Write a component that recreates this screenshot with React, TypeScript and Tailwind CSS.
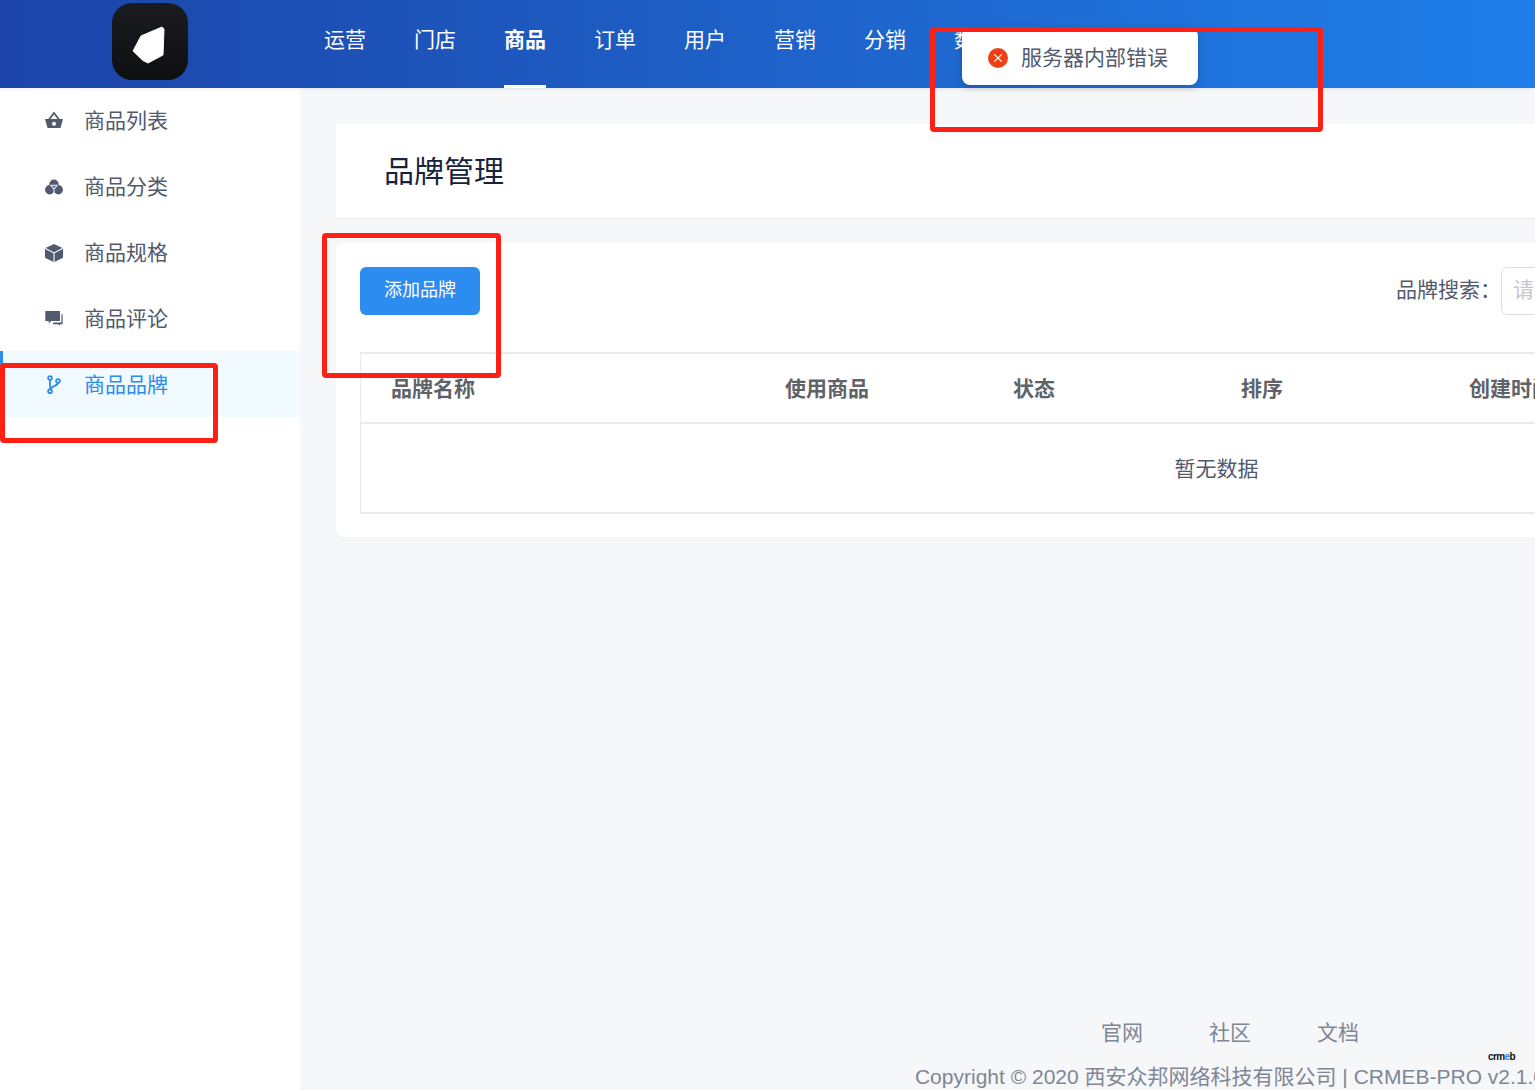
import React from 'react';

const font = "font-['Liberation_Sans','Noto_Sans_CJK_SC',sans-serif]";

const navItems = ['运营', '门店', '商品', '订单', '用户', '营销', '分销', '数据', '设置', '系统'];

function BasketIcon() {
  return (
    <svg viewBox="0 0 24 24" className="w-6 h-6">
      <path d="M7 10.5 L12 4 L17 10.5" fill="none" stroke="currentColor" strokeWidth="1.8" />
      <path d="M3 10 H21 L18.5 19 H5.5 Z" fill="currentColor" />
      <circle cx="12" cy="14.8" r="2" fill="#fff" />
    </svg>
  );
}

function CategoryIcon() {
  return (
    <svg viewBox="0 0 24 24" className="w-6 h-6">
      <circle cx="12" cy="9.3" r="4.7" fill="currentColor" />
      <circle cx="7.7" cy="14.7" r="4.7" fill="currentColor" />
      <circle cx="16.3" cy="14.7" r="4.7" fill="currentColor" />
      <path d="M8.8 10.4 L12 14 L15.2 10.4 Z M12 14 V17.5" fill="none" stroke="#d5d9e2" strokeWidth="1.2" />
    </svg>
  );
}

function CubeIcon() {
  return (
    <svg viewBox="0 0 24 24" className="w-6 h-6">
      <path d="M12 3 L21 7.3 V16.7 L12 21.3 L3 16.7 V7.3 Z" fill="currentColor" />
      <path d="M3 7.3 L12 12 L21 7.3 M12 12 V21.3" fill="none" stroke="#fff" strokeWidth="1.1" />
    </svg>
  );
}

function ChatIcon() {
  return (
    <svg viewBox="0 0 24 24" className="w-6 h-6">
      <path d="M3.3 4 H18 V14 H9.2 L6.7 16.4 V14 H3.3 Z" fill="currentColor" />
      <path d="M19.4 7.3 H20.6 V17.2 H18 V18.8 L16.2 17.2 H10.5 L11.6 15.6 H19.4 Z" fill="currentColor" />
    </svg>
  );
}

function BranchIcon() {
  return (
    <svg viewBox="0 0 24 24" className="w-6 h-6" fill="none" stroke="currentColor" strokeWidth="1.8">
      <circle cx="8" cy="5" r="1.9" />
      <circle cx="16" cy="8" r="1.9" />
      <circle cx="8" cy="18.2" r="1.9" />
      <path d="M8 7 V16.2" />
      <path d="M16 10 C15.5 13 11 12.5 8.4 16" />
    </svg>
  );
}

const sideItems = [
  { label: '商品列表', icon: <BasketIcon /> },
  { label: '商品分类', icon: <CategoryIcon /> },
  { label: '商品规格', icon: <CubeIcon /> },
  { label: '商品评论', icon: <ChatIcon /> },
  { label: '商品品牌', icon: <BranchIcon />, active: true },
];

export default function App() {
  return (
    <div className={`relative h-[1090px] w-full overflow-hidden bg-[#f5f7f9] flex flex-col ${font}`}>
      {/* Header */}
      <header className="h-[88px] shrink-0 flex bg-gradient-to-r from-[#1c44a8] to-[#1f7fea] shadow-[0_1px_4px_rgba(0,21,41,0.08)] relative z-10">
        <div className="w-[300px] shrink-0 flex justify-center pt-[3px]">
          <div className="w-[76px] h-[77px] rounded-[20px] bg-gradient-to-b from-[#1a1c20] to-[#0e0f11]">
            <svg viewBox="0 0 76 77" className="w-[76px] h-[77px]">
              <path d="M50 24 L52 26 L51 52 L36 60 L31 57.5 L21 48 L29 33 Z" fill="#fff" stroke="#fff" strokeWidth="1" strokeLinejoin="round" />
            </svg>
          </div>
        </div>
        <nav className="flex gap-12 pl-6 text-[21px] text-white whitespace-nowrap">
          {navItems.map((item) => (
            <div
              key={item}
              className={
                item === '商品'
                  ? 'h-[88px] flex items-center font-bold border-b-[3px] border-white pb-[5px]'
                  : 'h-[88px] flex items-center pb-2'
              }
            >
              {item}
            </div>
          ))}
        </nav>
      </header>

      <div className="flex flex-1 min-h-0">
        {/* Sidebar */}
        <aside className="w-[300px] shrink-0 -mt-px bg-white text-[21px] text-[#515a6e]">
          {sideItems.map((item) => (
            <div
              key={item.label}
              className={
                item.active
                  ? 'h-[66px] flex items-center gap-[18px] pl-[39px] pt-[2px] bg-[#f0faff] text-[#2d8cf0] border-l-[3px] border-[#2d8cf0]'
                  : 'h-[66px] flex items-center gap-[18px] pl-[42px] pt-[2px]'
              }
            >
              <span className="shrink-0">{item.icon}</span>
              <span>{item.label}</span>
            </div>
          ))}
        </aside>

        {/* Main */}
        <main className="w-[1860px] shrink-0 flex flex-col pt-9">
          <div className="ml-9 w-[1760px] h-[95px] bg-white border-b border-[#e8eaec] flex items-center pl-12 text-[30px] text-[#17233d]">
            品牌管理
          </div>

          <section className="ml-9 w-[1760px] mt-6 bg-white rounded-lg px-6 pt-6 pb-[23px]">
            <div className="flex items-center justify-between">
              <button className="w-[120px] h-12 rounded-md bg-[#2d8cf0] text-white text-[18px] pb-[2px]">添加品牌</button>
              <div className="flex items-center text-[21px] text-[#515a6e]">
                <span className="pb-[2px]">品牌搜索：</span>
                <div className="w-[571px] h-12 border border-[#dcdee2] rounded-md flex items-center pl-[11px] pb-[2px] text-[#c5c8ce]">
                  请输入品牌名称
                </div>
              </div>
            </div>

            <div className="mt-[37px] border-t-2 border-l border-[#e8eaec] text-[21px] text-[#515a6e]">
              <div className="h-[70px] flex items-center pt-[2px] font-bold border-b-2 border-[#e8eaec] text-[#5f6368]">
                <div className="w-[392px] pl-[30px]">品牌名称</div>
                <div className="w-[228px] pl-8">使用商品</div>
                <div className="w-[228px] pl-8">状态</div>
                <div className="w-[228px] pl-8">排序</div>
                <div className="w-[228px] pl-8">创建时间</div>
              </div>
              <div className="h-[90px] flex items-center justify-center pt-[2px] border-b-2 border-[#e8eaec]">暂无数据</div>
            </div>
          </section>

          <footer className="mt-auto -mb-[2px] text-[21px] text-[#808695] text-center whitespace-nowrap">
            <div className="flex justify-center gap-[66px] mb-3">
              <span>官网</span>
              <span>社区</span>
              <span>文档</span>
            </div>
            <div>Copyright © 2020 西安众邦网络科技有限公司 | CRMEB-PRO v2.1.0</div>
          </footer>
        </main>
      </div>

      {/* tiny logo over the footer */}
      <div className="absolute left-[1488px] top-[1051px] text-[10px] leading-[12px] font-bold text-[#111] tracking-[-0.6px]">
        crm<span className="text-[#2d8cf0]">e</span>b
      </div>

      {/* Toast */}
      <div className="absolute z-20 left-[962px] top-[28px] w-[236px] h-[57px] pt-[3px] bg-white rounded-lg shadow-[0_2px_8px_rgba(0,0,0,0.2)] flex items-center pl-[26px] gap-[13px] text-[21px] text-[#515a6e]">
        <svg viewBox="0 0 20 20" className="w-5 h-5 shrink-0">
          <circle cx="10" cy="10" r="10" fill="#ed4014" />
          <path d="M6.3 6.3 L13.7 13.7 M13.7 6.3 L6.3 13.7" stroke="#fff" strokeWidth="1.2" />
        </svg>
        <span>服务器内部错误</span>
      </div>

      {/* Red annotation boxes */}
      <div className="absolute z-30 left-[930px] top-[27px] w-[393px] h-[105px] border-[5px] border-[#ff2015] rounded-[4px]" />
      <div className="absolute z-30 left-[322px] top-[233px] w-[179px] h-[145px] border-[5px] border-[#ff2015] rounded-[4px]" />
      <div className="absolute z-30 left-0 top-[363px] w-[218px] h-[80px] border-[5px] border-[#ff2015] rounded-[4px]" />
    </div>
  );
}
